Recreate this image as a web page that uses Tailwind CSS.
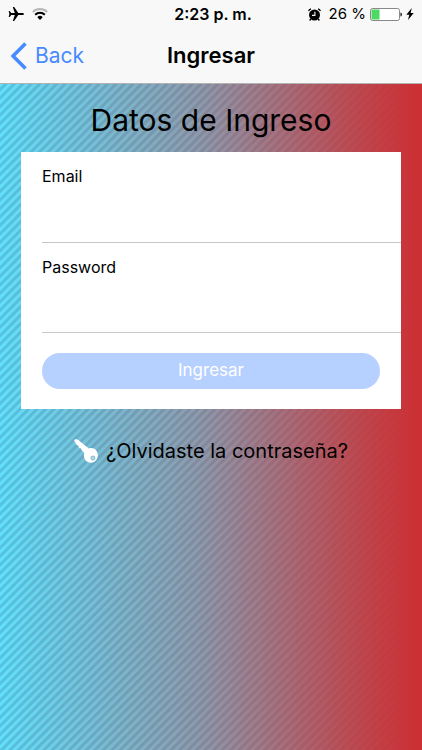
<!DOCTYPE html>
<html lang="es">
<head>
<meta charset="utf-8">
<meta name="viewport" content="width=device-width, initial-scale=1">
<title>Ingresar</title>
<script src="https://cdn.jsdelivr.net/npm/@tailwindcss/browser@4"></script>
</head>
<body class="flex min-h-screen flex-col bg-[#f8f8f8] font-[Inter,'Liberation_Sans',sans-serif] text-black">
<header class="border-b border-[#b2b2b2] bg-[#f8f8f8]">
  <div class="grid h-7 grid-cols-[1fr_auto_1fr] items-center px-2">
    <div class="flex items-center gap-2">
      <svg class="h-4 w-4" viewBox="0 0 16 16" aria-label="Modo avión"><path d="M16 8c0-.7-.8-1.100-2-1.100H10.300L6.200 1H4.800l2 5.900H3.200L1.700 5H.7l.7 3-.7 3h1l1.500-1.900h3.600l-2 5.900h1.400l4.100-5.900H14c1.200 0 2-.4 2-1.100z"/></svg>
      <svg class="h-3 w-4" viewBox="0 0 16 12" fill="none" aria-label="Wi-Fi"><path d="M.8 4a10.200 10.200 0 0 1 14.400 0" stroke="#b5b5b5" stroke-width="1.800"/><path d="M3.200 6.700a6.800 6.800 0 0 1 9.600 0" stroke="#000" stroke-width="2"/><path d="M5.300 9.200a3.800 3.800 0 0 1 5.400 0L8 12z" fill="#000"/></svg>
    </div>
    <div class="pl-1 text-base font-semibold">2:23 p. m.</div>
    <div class="flex items-center justify-end gap-1">
      <svg class="mr-1 h-[13px] w-[13px]" viewBox="0 0 13 13" aria-label="Alarma"><circle cx="6.500" cy="7" r="5.500"/><path d="M.6 3.200Q1 1.300 3 .8M10 .8q2 .5 2.400 2.400" stroke="#000" stroke-width="1.200" fill="none"/><path d="M2.700 11l-1 1.500M10.300 11l1 1.500" stroke="#000" stroke-width="1.400"/><path d="M6.900 3.800v3.600H4" stroke="#f8f8f8" stroke-width="1.100" fill="none"/></svg>
      <span class="text-[15px]">26 %</span>
      <svg class="h-[13px] w-8" viewBox="0 0 32 13" aria-label="Batería"><rect x=".5" y=".5" width="29" height="12" rx="2" fill="#fff" stroke="#888"/><path d="M1.500 1.500H9.500v10h-8z" fill="#4cd964"/><path d="M30.500 4.500c1.800.6 1.800 3.400 0 4z"/></svg>
      <svg class="h-3 w-2" viewBox="0 0 8 12" aria-label="Cargando"><path d="M5.800 0 .3 6.800h3L2 12l5.700-7H4.600z"/></svg>
    </div>
  </div>
  <nav class="grid h-[55px] grid-cols-[1fr_auto_1fr] items-center px-[11px]">
    <button type="button" class="flex items-center gap-2 justify-self-start text-[21px] text-[#488aff]">
      <svg class="h-7 w-4" viewBox="0 0 16 28" fill="none" stroke="#488aff" stroke-width="3.600" aria-hidden="true"><path d="M14.500 1.500 2 14l12.500 12.500"/></svg>Back
    </button>
    <h1 class="text-[22px] font-semibold">Ingresar</h1>
  </nav>
</header>
<main class="flex-1 bg-[linear-gradient(90deg,#cb303400_0%,#cb303466_48%,#cb3034a6_68%,#cb3034d9_84%,#cb3034_99%),repeating-linear-gradient(135deg,#63e0fc_0px,#63e0fc_2px,#54c3e1_3px,#54c3e1_5px,#63e0fc_6px)] px-[21px] pt-4">
  <h2 class="text-center text-[30px] leading-10">Datos de Ingreso</h2>
  <form class="mt-3 bg-white pb-5 pl-[21px]">
    <div class="flex h-[91px] flex-col border-b border-[#c8c7cc] pt-3">
      <label for="email" class="text-base">Email</label>
      <input id="email" type="email" class="w-full flex-1 outline-none">
    </div>
    <div class="flex h-[90px] flex-col border-b border-[#c8c7cc] pt-3">
      <label for="password" class="text-base">Password</label>
      <input id="password" type="password" class="w-full flex-1 outline-none">
    </div>
    <div class="pr-[21px] pt-5">
      <button type="submit" disabled class="h-9 w-full rounded-full bg-[#b6d0ff] text-[17px] text-white">Ingresar</button>
    </div>
  </form>
  <a href="#" class="mt-6 flex items-center justify-center gap-2 text-[20px] leading-9">
    <svg class="h-6 w-6" viewBox="0 0 24 24" aria-hidden="true"><path fill="#fff" d="M.2 1.800C.2.600 1.300-.1 2.600.3L4.300 1l10.500 8.400c3.300-1 6.600.2 8.100 3 1.900 3.800.8 8.300-2.600 10.400-3 1.900-7 1-9-1.800-1.500-2.100-1.800-4.600-1-7L7.500 11l-.7-1.800-1.800-.4-.6-2-1.700-.7z"/><circle cx="18.900" cy="19" r="2" fill="#b4dbea" stroke="#6fa9c4" stroke-width=".8"/></svg>
    ¿Olvidaste la contraseña?
  </a>
</main>
</body>
</html>
